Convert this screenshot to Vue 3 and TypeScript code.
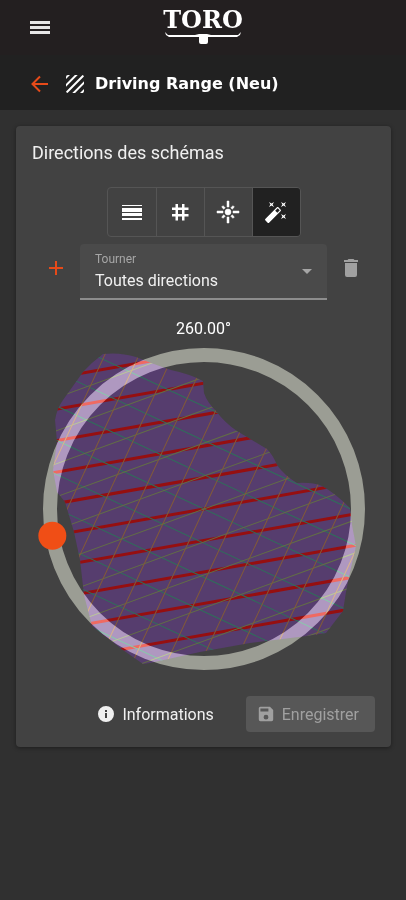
<script setup lang="ts">
import { computed, ref } from 'vue'

type Mode = 'stripes' | 'grid' | 'radial' | 'auto'

const modes: { id: Mode; label: string; path: string }[] = [
  {
    id: 'stripes',
    label: 'Lignes',
    path: 'M2 5H22V6H2ZM2 8H22V12H2ZM2 13H22V16H2ZM2 18H22V20H2Z',
  },
  {
    id: 'grid',
    label: 'Grille',
    path: 'M7.5 4H10V7.500H14V4H16.500V7.500H20.500V10H16.500V14H20.500V16.500H16.500V20.500H14V16.500H10V20.500H7.500V16.500H4V14H7.500V10H4V7.500H7.500ZM10 10V14H14V10Z',
  },
  {
    id: 'radial',
    label: 'Radial',
    path: 'M7 11H1V13H7V11M9.17 7.76L7.05 5.64L5.64 7.05L7.76 9.17L9.17 7.76M13 1H11V7H13V1M18.36 7.05L16.95 5.64L14.83 7.76L16.24 9.17L18.36 7.05M17 11V13H23V11H17M12 9A3 3 0 0 0 9 12A3 3 0 0 0 12 15A3 3 0 0 0 15 12A3 3 0 0 0 12 9M14.83 16.24L16.95 18.36L18.36 16.95L16.24 14.83L14.83 16.24M5.64 16.95L7.05 18.36L9.17 16.24L7.76 14.83L5.64 16.95M11 23H13V17H11V23Z',
  },
  {
    id: 'auto',
    label: 'Automatique',
    path: 'M7.5 5.6L5 7L6.4 4.5L5 2L7.5 3.4L10 2L8.6 4.5L10 7L7.5 5.6M19.5 15.4L22 14L20.6 16.5L22 19L19.5 17.6L17 19L18.4 16.5L17 14L19.5 15.4M22 2L20.6 4.5L22 7L19.5 5.6L17 7L18.4 4.5L17 2L19.5 3.4L22 2M13.34 12.78L15.78 10.34L13.66 8.22L11.22 10.66L13.34 12.78M14.37 7.29L16.71 9.63C17.1 10 17.1 10.65 16.71 11.04L5.04 22.71C4.65 23.1 4 23.1 3.63 22.71L1.29 20.37C.9 20 .9 19.35 1.29 18.96L12.96 7.29C13.35 6.9 14 6.9 14.37 7.29Z',
  },
]

const mode = ref<Mode>('auto')
const direction = ref('all')
const angle = ref(260)

// Handle position on the ring; 0 degrees points up, clockwise.
const handle = computed(() => {
  const rad = (angle.value * Math.PI) / 180
  return { x: 154 * Math.sin(rad), y: -154 * Math.cos(rad) }
})

// Parallel mowing lines, 31 units apart, through the dial centre.
const offsets = Array.from({ length: 13 }, (_, i) => (i - 6) * 31)
const families = computed(() => [
  { name: 'main', turn: angle.value - 270 },
  { name: 'green', turn: angle.value - 235 },
  { name: 'olive', turn: angle.value - 280 },
  { name: 'orange', turn: angle.value - 325 },
])
</script>

<template>
  <div class="app">
    <header class="topbar">
      <button class="icon-button" type="button" aria-label="Menu">
        <svg viewBox="0 0 24 24" width="24" height="24"><path d="M2 5H22V8H2ZM2 10H22V13H2ZM2 15H22V18H2Z" /></svg>
      </button>
      <svg class="logo" viewBox="0 0 84 40" width="84" height="40" role="img" aria-label="TORO">
        <text x="42" y="20" text-anchor="middle">TORO</text>
        <path d="M4 24L7 27H34L38 26H46L50 27H77L80 24L79 27L76 29H47V34Q47 36 45 36H40Q38 36 38 34V29H8L5 27Z" />
      </svg>
    </header>

    <nav class="subbar">
      <a class="back" href="#" aria-label="Retour">
        <svg viewBox="0 0 24 24" width="24" height="24"><path d="M20 12H5M12 4.500L4.500 12L12 19.500" /></svg>
      </a>
      <svg class="texture" viewBox="0 0 24 24" width="24" height="24" aria-hidden="true">
        <path d="M9.29 21H12.120L21 12.120V9.290M19 21C19.550 21 20.050 20.780 20.410 20.410C20.780 20.050 21 19.550 21 19V17L17 21M5 3A2 2 0 0 0 3 5V7L7 3M11.880 3L3 11.880V14.710L14.710 3M19.500 3.080L3.080 19.500C3.170 19.850 3.350 20.160 3.590 20.410C3.840 20.650 4.150 20.820 4.500 20.920L20.930 4.500C20.740 3.800 20.200 3.260 19.500 3.080Z" />
      </svg>
      <h1>Driving Range (Neu)</h1>
    </nav>

    <main class="card">
      <h2>Directions des schémas</h2>

      <div class="modes" role="group" aria-label="Type de schéma">
        <button
          v-for="m in modes"
          :key="m.id"
          type="button"
          :class="{ active: mode === m.id }"
          :aria-label="m.label"
          :aria-pressed="mode === m.id"
          @click="mode = m.id"
        >
          <svg viewBox="0 0 24 24" width="24" height="24" :class="m.id"><path fill-rule="evenodd" :d="m.path" /></svg>
        </button>
      </div>

      <div class="turn-row">
        <button class="icon-button add" type="button" aria-label="Ajouter">
          <svg viewBox="0 0 24 24" width="24" height="24"><path d="M12 5V19M5 12H19" /></svg>
        </button>
        <div class="field">
          <label for="direction">Tourner</label>
          <select id="direction" v-model="direction">
            <option value="all">Toutes directions</option>
          </select>
          <svg class="caret" viewBox="0 0 10 5" width="10" height="5" aria-hidden="true"><path d="M0 0H10L5 5Z" /></svg>
        </div>
        <button class="icon-button remove" type="button" aria-label="Supprimer">
          <svg viewBox="0 0 24 24" width="24" height="24"><path d="M19 4H15.500L14.500 3H9.500L8.500 4H5V6H19M6 19A2 2 0 0 0 8 21H16A2 2 0 0 0 18 19V7H6V19Z" /></svg>
        </button>
      </div>

      <output class="angle" for="angle">{{ angle.toFixed(2) }}°</output>

      <div class="dial">
        <svg viewBox="-161 -161 322 322" aria-hidden="true">
          <defs>
            <clipPath id="area">
              <path
                transform="translate(-204 -509)"
                d="M103 354Q120 352 136 357Q156 365 171 370Q190 374 203 381L204 393Q207 402 216 411Q225 423 237 431L252 440L267 449Q273 455 277 465Q284 475 297 483Q312 482 322 486Q335 493 350 508L352 525L356 546L350 572L346 592L343 611L326 633L307 636L250 643L200 652L150 663L143 664L123 650L92 626L84 595L80 560L74 532L65 502L57 492L53 470L57 442L55 420Q57 408 63 400L83 372Q92 362 103 354Z"
              />
            </clipPath>
          </defs>
          <g clip-path="url(#area)">
            <rect class="area" x="-161" y="-161" width="322" height="322" />
            <g v-for="f in families" :key="f.name" :class="['lines', f.name]" :transform="`rotate(${f.turn})`">
              <line v-for="o in offsets" :key="o" x1="-240" x2="240" :y1="o" :y2="o" />
            </g>
          </g>
          <circle class="ring" r="154" />
          <circle class="handle" :cx="handle.x" :cy="handle.y" r="14" />
        </svg>
        <input id="angle" v-model.number="angle" type="range" min="0" max="360" step="1" aria-label="Angle" />
      </div>

      <footer class="actions">
        <button class="info" type="button">
          <svg viewBox="0 0 16 16" width="16" height="16"><path fill-rule="evenodd" d="M8 0A8 8 0 1 0 8 16A8 8 0 1 0 8 0ZM7 4H9V6H7ZM7 7H9V12H7Z" /></svg>
          Informations
        </button>
        <button class="save" type="button" disabled>
          <svg viewBox="2 2 20 20" width="16" height="16"><path d="M15 9H5V5H15M12 19A3 3 0 0 1 9 16A3 3 0 0 1 12 13A3 3 0 0 1 15 16A3 3 0 0 1 12 19M17 3H5C3.890 3 3 3.900 3 5V19A2 2 0 0 0 5 21H19A2 2 0 0 0 21 19V7L17 3Z" fill-rule="evenodd" /></svg>
          Enregistrer
        </button>
      </footer>
    </main>
  </div>
</template>

<style>
body {
  background: #303030;
}
</style>

<style scoped>
.app {
  min-height: 100vh;
  background: #303030;
  color: #fff;
  font-family: Roboto, sans-serif;
}

button {
  border: 0;
  padding: 0;
  background: none;
  color: inherit;
  font: inherit;
  cursor: pointer;
}

svg {
  display: block;
  fill: currentColor;
}

.topbar {
  display: grid;
  grid-template-columns: 48px 1fr 48px;
  align-items: center;
  height: 55px;
  padding: 0 16px;
  background: #231f20;
}

.icon-button {
  display: grid;
  place-items: center;
  width: 48px;
  height: 48px;
}

.topbar .icon-button {
  color: #e6e6e6;
}

.logo {
  justify-self: center;
  overflow: visible;
}

.logo text {
  font: bold 24px "DejaVu Serif", serif;
}

.subbar {
  display: flex;
  align-items: center;
  height: 55px;
  padding: 2px 28px 0;
  box-sizing: border-box;
  background: #212121;
}

.back {
  margin-right: 11px;
  color: #e64a19;
}

.back svg,
.add svg {
  fill: none;
  stroke: currentColor;
  stroke-width: 2;
}

.texture {
  margin-right: 8px;
}

h1 {
  margin: 0;
  font: bold 16px/24px "DejaVu Sans", sans-serif;
}

.card {
  display: flex;
  flex-direction: column;
  margin: 16px 15px 16px 16px;
  padding: 15px 16px;
  border-radius: 4px;
  background: #424242;
  box-shadow: 0 1px 4px rgba(0, 0, 0, 0.4);
}

h2 {
  margin: 0;
  color: #f0f0f0;
  font-size: 18px;
  font-weight: 400;
  line-height: 24px;
}

.modes {
  display: flex;
  align-self: center;
  margin-top: 22px;
  border: 1px solid #555;
  border-radius: 4px;
  overflow: hidden;
}

.modes button {
  display: grid;
  place-items: center;
  width: 48px;
  height: 48px;
}

.modes button + button {
  border-left: 1px solid #555;
}

.modes .active {
  background: #212121;
}

.modes .radial {
  stroke: currentColor;
  stroke-width: 0.5;
}

.turn-row {
  display: grid;
  grid-template-columns: 48px 1fr 48px;
  margin-top: 7px;
}

.add {
  color: #e64a19;
}

.remove {
  color: #a0a0a0;
}

.field {
  position: relative;
  height: 54px;
  border-bottom: 2px solid #8d8d8d;
  border-radius: 4px 4px 0 0;
  background: #4a4a4a;
}

.field label {
  position: absolute;
  top: 7px;
  left: 15px;
  color: #a6a6a6;
  font-size: 12px;
  line-height: 16px;
  pointer-events: none;
}

.field select {
  width: 100%;
  height: 100%;
  padding: 18px 40px 0 15px;
  border: 0;
  appearance: none;
  background: none;
  color: #f0f0f0;
  font: 16px Roboto, sans-serif;
}

.field option {
  color: #212121;
}

.caret {
  position: absolute;
  top: 25px;
  right: 15px;
  color: #a6a6a6;
  pointer-events: none;
}

.angle {
  margin-top: 17px;
  font-size: 16px;
  line-height: 24px;
  text-align: center;
}

.dial {
  position: relative;
  align-self: center;
  width: 94%;
  max-width: 322px;
  margin-top: 7px;
}

.dial svg {
  width: 100%;
  overflow: visible;
}

.dial input {
  position: absolute;
  inset: 0;
  width: 100%;
  height: 100%;
  margin: 0;
  opacity: 0;
}

.area {
  fill: #563d6e;
}

.lines {
  stroke-width: 1;
}

.main {
  stroke: #960f10;
  stroke-width: 3;
}

.green {
  stroke: #2f6f5a;
}

.olive {
  stroke: #626d46;
}

.orange {
  stroke: #825a38;
}

.ring {
  fill: none;
  stroke: #595b52;
  stroke-width: 14;
  mix-blend-mode: plus-lighter;
}

.handle {
  fill: #f04e16;
}

.actions {
  display: flex;
  justify-content: flex-end;
  gap: 32px;
  margin-top: 26px;
  color: #f0f0f0;
  font-size: 16px;
}

.actions button {
  display: flex;
  align-items: center;
  gap: 8px;
  height: 36px;
}

.actions .save {
  padding: 0 16px 0 12px;
  border-radius: 4px;
  background: #575757;
  color: #a0a0a0;
}
</style>
